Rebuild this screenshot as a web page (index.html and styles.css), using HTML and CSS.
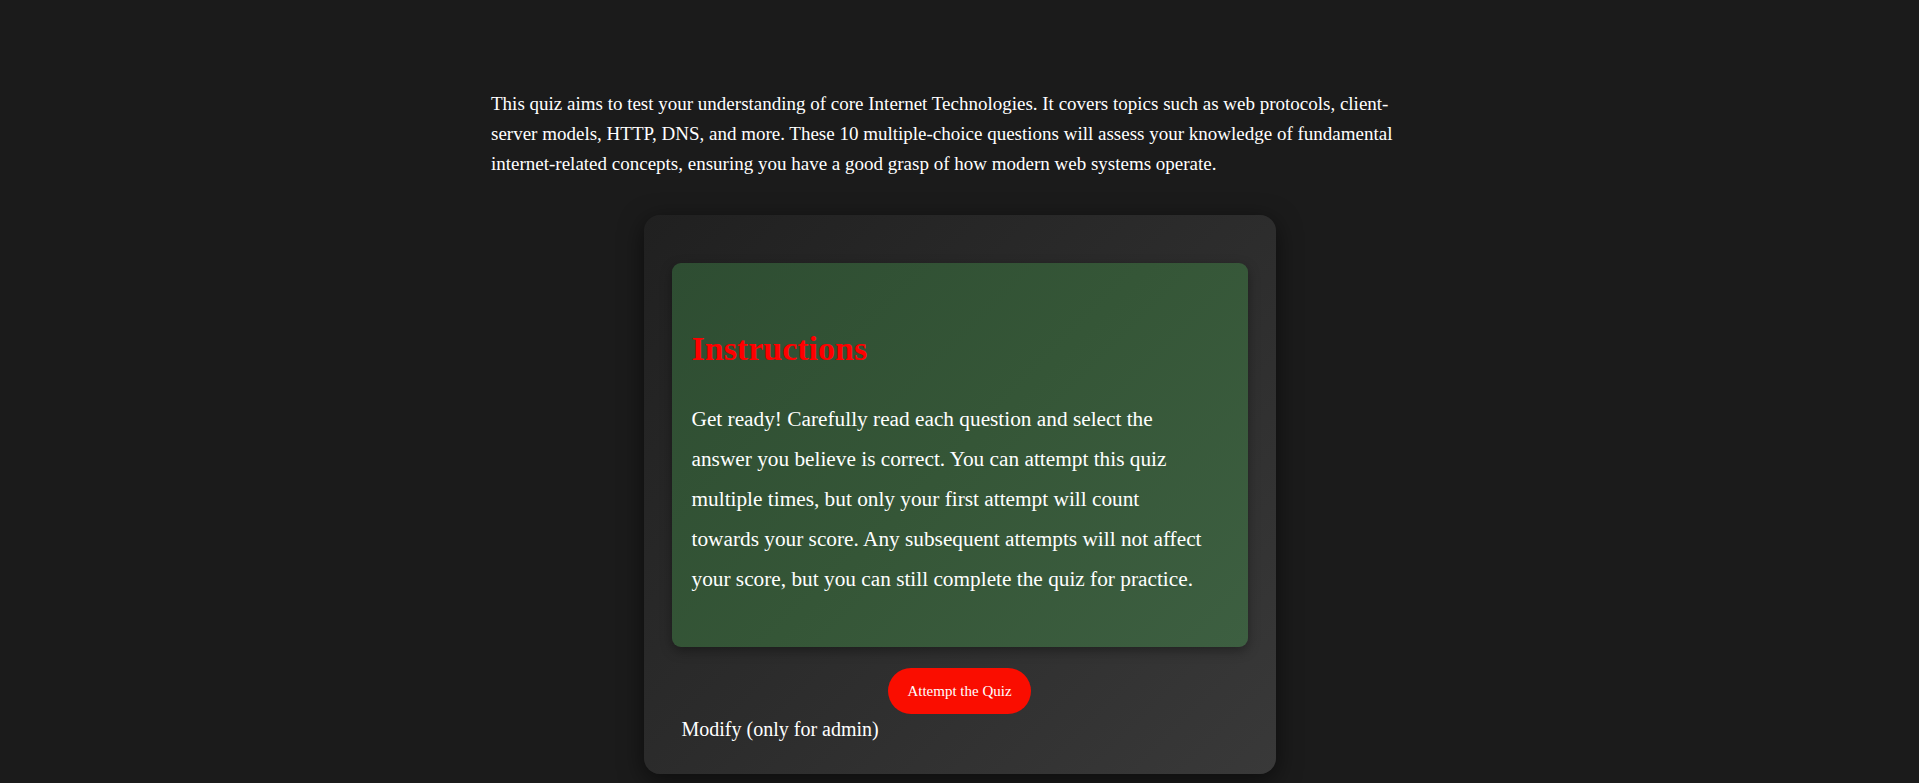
FILE: index.html
```html
<!DOCTYPE html>
<html lang="en">
<head>
<meta charset="utf-8">
<title>Internet Technologies Quiz</title>
<link rel="stylesheet" href="styles.css">
</head>
<body>
<main class="page">
  <p class="intro">This quiz aims to test your understanding of core Internet Technologies. It covers topics such as web protocols, client-server models, HTTP, DNS, and more. These 10 multiple-choice questions will assess your knowledge of fundamental internet-related concepts, ensuring you have a good grasp of how modern web systems operate.</p>
  <section class="card">
    <div class="instructions">
      <h2 class="instructions-title">Instructions</h2>
      <p class="instructions-text">Get ready! Carefully read each question and select the answer you believe is correct. You can attempt this quiz multiple times, but only your first attempt will count towards your score. Any subsequent attempts will not affect your score, but you can still complete the quiz for practice.</p>
    </div>
    <div class="actions">
      <button class="attempt-btn" type="button">Attempt the Quiz</button>
    </div>
    <div class="admin">
      <a class="modify-link" href="#">Modify (only for admin)</a>
    </div>
  </section>
</main>
</body>
</html>
```

FILE: styles.css
```css
html, body {
  margin: 0;
  padding: 0;
}

body {
  background: #1b1b1b;
  color: #ffffff;
  font-family: "Liberation Serif", "Times New Roman", serif;
  min-height: 783px;
}

.page {
  display: flex;
  flex-direction: column;
  align-items: center;
  padding-top: 89px;
}

.intro {
  width: 937px;
  margin: 0 0 36px 0;
  font-size: 19px;
  line-height: 30px;
  box-sizing: border-box;
}

.card {
  width: 632px;
  box-sizing: border-box;
  padding: 48px 28px 33px;
  border-radius: 16px;
  background: linear-gradient(135deg, #202020 0%, #2c2c2c 50%, #393939 100%);
  box-shadow: 0 6px 24px rgba(0, 0, 0, 0.55);
}

.instructions {
  padding: 20px 20px 26px;
  border-radius: 9px;
  background: linear-gradient(135deg, #2e4d32 0%, #355637 50%, #3d5f41 100%);
  box-shadow: 0 4px 12px rgba(0, 0, 0, 0.35);
  height: 384px;
  box-sizing: border-box;
}

.instructions-title {
  margin: 46px 0 0;
  color: #ff0000;
  font-size: 34px;
  line-height: 40px;
  font-weight: bold;
}

.instructions-text {
  margin: 30px 0 0;
  max-width: 516px;
  font-size: 21.3px;
  line-height: 40px;
}

.actions {
  display: flex;
  justify-content: center;
  margin-top: 21px;
}

.attempt-btn {
  width: 143px;
  height: 46px;
  border: none;
  border-radius: 23px;
  background: #fa0d00;
  color: #ffffff;
  font-family: "Liberation Serif", "Times New Roman", serif;
  font-size: 15px;
  cursor: pointer;
}

.admin {
  margin-top: 3px;
  padding-left: 10px;
}

.modify-link {
  display: inline-block;
  color: #ffffff;
  text-decoration: none;
  font-size: 20px;
  line-height: 24px;
}
```
